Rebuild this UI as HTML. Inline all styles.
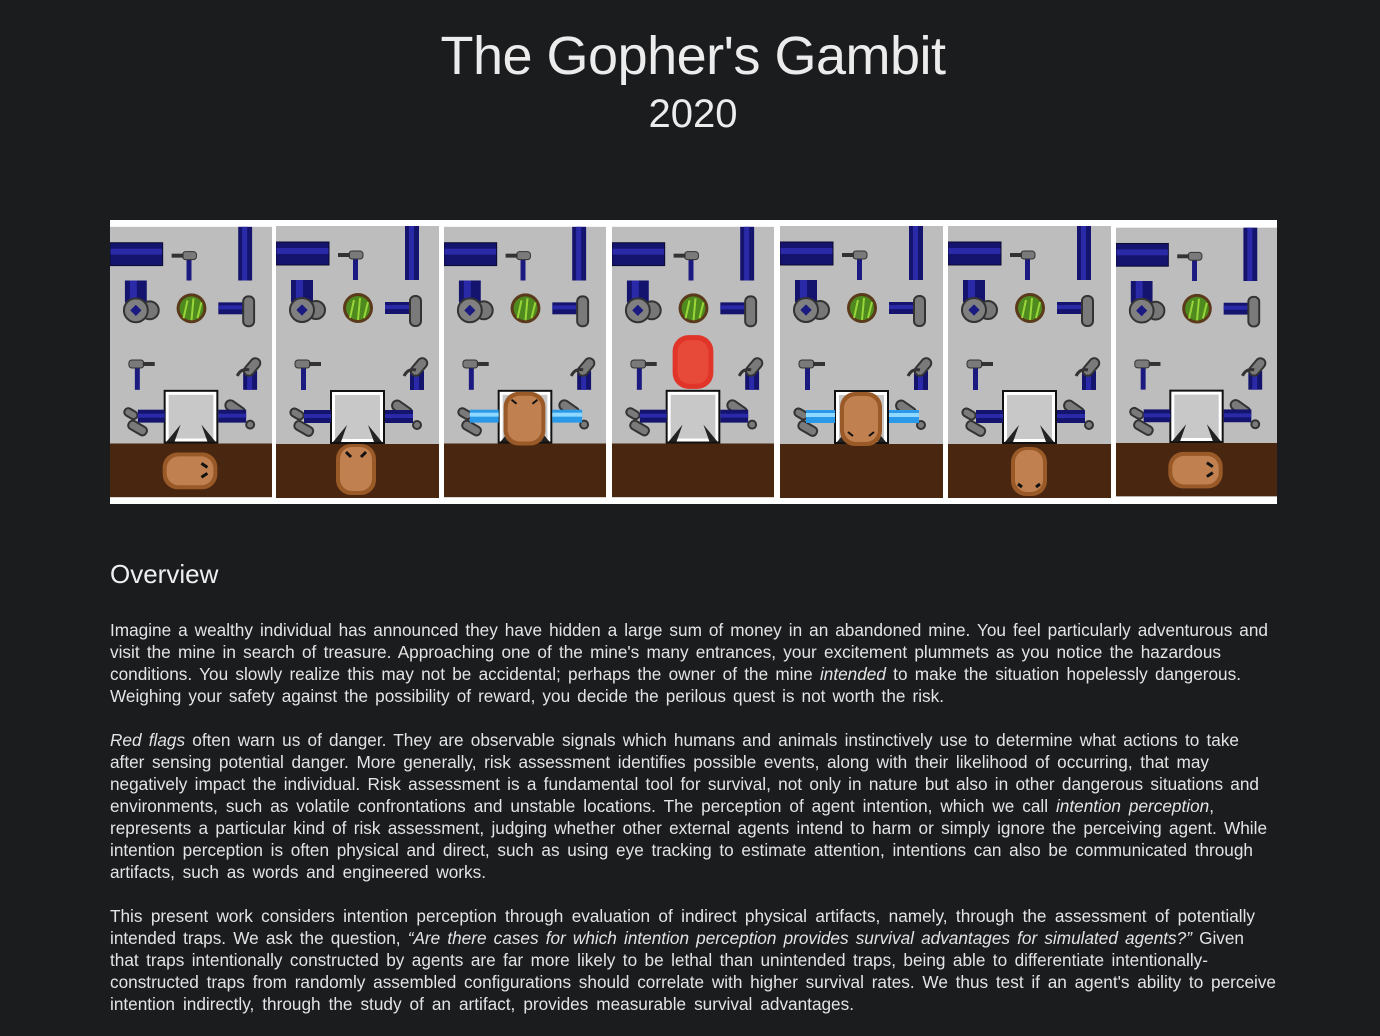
<!DOCTYPE html>
<html><head><meta charset="utf-8">
<style>
html,body{margin:0;padding:0;background:#1b1c1e;}
body{width:1380px;height:1036px;overflow:hidden;position:relative;font-family:"Liberation Sans",sans-serif;color:#e6e6e6;}
.t{position:absolute;left:0;width:1386px;text-align:center;color:#ececec;}
#title{top:23px;font-size:54px;line-height:66px;letter-spacing:-0.5px;}
#year{top:91px;font-size:40px;line-height:46px;}
#strip{position:absolute;left:110px;top:220px;width:1167px;height:284px;background:#fff;}
#strip svg{position:absolute;top:6px;}
h2{position:absolute;left:110px;top:557px;margin:0;font-weight:normal;font-size:26px;line-height:34px;color:#efefef;}
.p{position:absolute;left:110px;font-size:17.2px;color:#e4e4e4;}
.p div{height:22px;line-height:22px;white-space:nowrap;text-align:justify;text-align-last:justify;}
</style></head><body>
<div class="t" id="title">The Gopher's Gambit</div>
<div class="t" id="year">2020</div>

<svg width="0" height="0" style="position:absolute">
<defs>
<g id="scene">
<rect width="163" height="272" fill="#bdbdbd"/>
<rect y="218" width="163" height="54" fill="#48260f"/>
<rect x="0" y="16" width="53" height="23" fill="#14146e"/><rect x="0" y="22" width="53" height="6" fill="#2a2aa8"/><rect x="0" y="16" width="53" height="23" fill="none" stroke="#0a0a30" stroke-width="1"/>
<rect x="129" y="0" width="14" height="54" fill="#14146e"/><rect x="133" y="0" width="5" height="54" fill="#2a2aa8"/>
<rect x="77" y="30" width="5" height="24" fill="#1a1a80"/><rect x="73" y="25" width="14" height="8" rx="3" fill="#7a7a7a" stroke="#333"/><rect x="62" y="27" width="12" height="4" fill="#333"/>
<rect x="15" y="54" width="22" height="22" fill="#14146e"/><rect x="20" y="54" width="7" height="22" fill="#2a2aa8"/>
<circle cx="40" cy="84" r="9" fill="#777" stroke="#333" stroke-width="2"/><circle cx="26" cy="84" r="12" fill="#808080" stroke="#333" stroke-width="2"/><rect x="22" y="80" width="8" height="8" transform="rotate(45 26 84)" fill="#1a1a80"/>
<circle cx="82" cy="82" r="15" fill="#5a3a1a"/><circle cx="82" cy="82" r="12" fill="#4e8a1e"/><path d="M74 92 L78 74 M82 94 L84 72 M88 92 L92 76" stroke="#9ad63a" stroke-width="2"/>
<rect x="109" y="76" width="26" height="12" fill="#14146e"/><rect x="109" y="79" width="26" height="4" fill="#2a2aa8"/><rect x="134" y="70" width="11" height="30" rx="5" fill="#7a7a7a" stroke="#333" stroke-width="2"/>
<rect x="25" y="140" width="5" height="24" fill="#1a1a80"/><rect x="19" y="134" width="15" height="8" rx="3" fill="#7a7a7a" stroke="#333"/><rect x="33" y="136" width="12" height="4" fill="#333"/>
<rect x="134" y="145" width="14" height="19" fill="#14146e"/><rect x="138" y="145" width="5" height="19" fill="#2a2aa8"/><rect x="138" y="131" width="10" height="20" rx="5" transform="rotate(40 143 141)" fill="#7a7a7a" stroke="#333" stroke-width="2"/>
<path d="M128 150 q4 -8 12 -6" stroke="#333" stroke-width="3" fill="none"/>
<rect x="54" y="164" width="55" height="54" fill="#111"/><rect x="56" y="166" width="51" height="50" fill="#fff"/><rect x="59" y="169" width="45" height="44" fill="#c8c8c8"/>
<path d="M57 216 L71 199 L65 216Z M106 216 L92 199 L98 216Z" fill="#222"/>
<rect x="14" y="184" width="14" height="8" rx="4" fill="#7a7a7a" stroke="#333" stroke-width="2" transform="rotate(30 21 188)"/>
<rect x="18" y="198" width="20" height="9" rx="4" fill="#7a7a7a" stroke="#333" stroke-width="2" transform="rotate(30 28 202)"/>
<rect x="115" y="178" width="22" height="10" rx="5" fill="#7a7a7a" stroke="#333" stroke-width="2" transform="rotate(35 126 183)"/>
<circle cx="141" cy="199" r="4" fill="#7a7a7a" stroke="#333" stroke-width="2"/>
</g>
<g id="pipesDark"><rect x="28" y="184" width="27" height="13" fill="#14146e"/><rect x="28" y="188" width="27" height="4" fill="#2a2aa8"/><rect x="109" y="184" width="28" height="13" fill="#14146e"/><rect x="109" y="188" width="28" height="4" fill="#2a2aa8"/></g>
<g id="pipesLit"><rect x="26" y="184" width="29" height="13" fill="#2a9ae8"/><rect x="26" y="187" width="29" height="4" fill="#8fd8ff"/><rect x="109" y="184" width="30" height="13" fill="#2a9ae8"/><rect x="109" y="187" width="30" height="4" fill="#8fd8ff"/></g>
<g id="gH"><rect x="53" y="227" width="55" height="37" rx="15" fill="#9a5a28"/><rect x="57" y="231" width="47" height="29" rx="12" fill="#c08050"/><path d="M92 238 l6 4 M92 252 l6 -4" stroke="#111" stroke-width="3"/></g>
<g id="gV"><rect x="60" y="218" width="40" height="51" rx="15" fill="#9a5a28"/><rect x="64" y="221" width="32" height="44" rx="12" fill="#c08050"/><path d="M70 226 l5 5 M90 226 l-5 5" stroke="#111" stroke-width="3"/></g>
<g id="gBox"><rect x="60" y="166" width="42" height="54" rx="15" fill="#9a5a28"/><rect x="64" y="170" width="34" height="46" rx="12" fill="#c08050"/><path d="M68 174 l5 4 M94 174 l-5 4" stroke="#111" stroke-width="2"/></g>
<g id="gBoxD"><rect x="60" y="166" width="42" height="54" rx="15" fill="#9a5a28"/><rect x="64" y="170" width="34" height="46" rx="12" fill="#c08050"/><path d="M68 206 l5 4 M94 206 l-5 4" stroke="#111" stroke-width="2"/></g>
<g id="gRed"><rect x="61" y="109" width="41" height="54" rx="16" fill="#e03528"/><rect x="66" y="114" width="31" height="44" rx="12" fill="#e84a3a"/></g>
<g id="gV2"><rect x="63" y="221" width="36" height="49" rx="15" fill="#9a5a28"/><rect x="67" y="224" width="28" height="42" rx="12" fill="#c08050"/><path d="M70 258 l4 3 M92 258 l-4 3" stroke="#111" stroke-width="3"/></g>
</defs></svg>

<div id="strip">
<svg style="left:0" width="162" height="272" viewBox="0 0 163 272"><use href="#scene"/><use href="#pipesDark"/><use href="#gH"/></svg>
<svg style="left:166px" width="163" height="272" viewBox="0 0 163 272"><use href="#scene"/><use href="#pipesDark"/><use href="#gV"/></svg>
<svg style="left:334px" width="162" height="272" viewBox="0 0 163 272"><use href="#scene"/><use href="#pipesLit"/><use href="#gBox"/></svg>
<svg style="left:502px" width="162" height="272" viewBox="0 0 163 272"><use href="#scene"/><use href="#pipesDark"/><use href="#gRed"/></svg>
<svg style="left:670px" width="163" height="272" viewBox="0 0 163 272"><use href="#scene"/><use href="#pipesLit"/><use href="#gBoxD"/></svg>
<svg style="left:838px" width="163" height="272" viewBox="0 0 163 272"><use href="#scene"/><use href="#pipesDark"/><use href="#gV2"/></svg>
<svg style="left:1006px" width="161" height="272" viewBox="0 0 163 272"><use href="#scene"/><use href="#pipesDark"/><use href="#gH"/></svg>
</div>

<h2>Overview</h2>

<div class="p" style="top:619px">
<div style="width:1158px">Imagine a wealthy individual has announced they have hidden a large sum of money in an abandoned mine. You feel particularly adventurous and</div>
<div style="width:1111px">visit the mine in search of treasure. Approaching one of the mine's many entrances, your excitement plummets as you notice the hazardous</div>
<div style="width:1131px">conditions. You slowly realize this may not be accidental; perhaps the owner of the mine <i>intended</i> to make the situation hopelessly dangerous.</div>
<div style="width:834px">Weighing your safety against the possibility of reward, you decide the perilous quest is not worth the risk.</div>
</div>

<div class="p" style="top:729px">
<div style="width:1129px"><i>Red flags</i> often warn us of danger. They are observable signals which humans and animals instinctively use to determine what actions to take</div>
<div style="width:1099px">after sensing potential danger. More generally, risk assessment identifies possible events, along with their likelihood of occurring, that may</div>
<div style="width:1149px">negatively impact the individual. Risk assessment is a fundamental tool for survival, not only in nature but also in other dangerous situations and</div>
<div style="width:1104px">environments, such as volatile confrontations and unstable locations. The perception of agent intention, which we call <i>intention perception</i>,</div>
<div style="width:1157px">represents a particular kind of risk assessment, judging whether other external agents intend to harm or simply ignore the perceiving agent. While</div>
<div style="width:1143px">intention perception is often physical and direct, such as using eye tracking to estimate attention, intentions can also be communicated through</div>
<div style="width:376px">artifacts, such as words and engineered works.</div>
</div>

<div class="p" style="top:905px">
<div style="width:1145px">This present work considers intention perception through evaluation of indirect physical artifacts, namely, through the assessment of potentially</div>
<div style="width:1134px">intended traps. We ask the question, <i>“Are there cases for which intention perception provides survival advantages for simulated agents?”</i> Given</div>
<div style="width:1098px">that traps intentionally constructed by agents are far more likely to be lethal than unintended traps, being able to differentiate intentionally-</div>
<div style="width:1166px">constructed traps from randomly assembled configurations should correlate with higher survival rates. We thus test if an agent's ability to perceive</div>
<div style="width:744px">intention indirectly, through the study of an artifact, provides measurable survival advantages.</div>
</div>
</body></html>
